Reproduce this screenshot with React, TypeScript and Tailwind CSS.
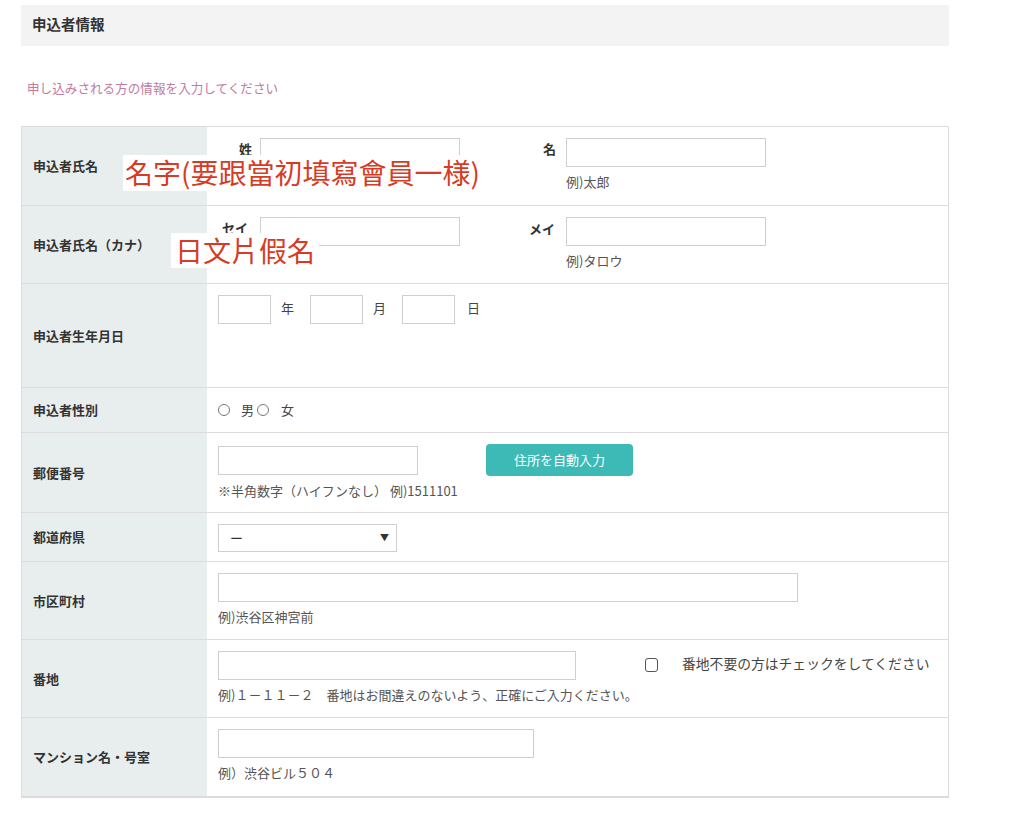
import React from "react";

const jp = { fontFamily: '"Noto Sans CJK JP", "Noto Sans", sans-serif' };

function Field({ w }: { w: string }) {
  return <div className={`${w} h-[29px] border border-[#cfcfcf] bg-white`} />;
}

function Note({ children }: { children: React.ReactNode }) {
  return <p className="mt-[5px] text-[13px] leading-[20px] text-[#555]">{children}</p>;
}

function Row({ label, h, children, center }: { label: string; h: string; children: React.ReactNode; center?: boolean }) {
  return (
    <div className={`flex ${h} border-b border-[#dcdcdc] last:border-b-0`}>
      <div className="w-[185px] shrink-0 bg-[#e8eeee] flex items-center pl-[11px] text-[13px] font-bold text-[#333]">
        {label}
      </div>
      <div className={`flex-1 px-[11px] ${center ? "flex items-center" : "pt-[11px]"}`}>{children}</div>
    </div>
  );
}

export default function App() {
  return (
    <div className="min-h-[819px] bg-white pt-[5px] pl-[21px]" style={jp}>
      <div className="w-[928px]">
        <div className="h-[41px] bg-[#f3f3f3] flex items-center pl-[11px] pb-[3px] text-[14.5px] font-bold text-[#333]">
          申込者情報
        </div>
        <p className="mt-[32px] pl-[6px] text-[12.6px] leading-[20px] text-[#c27ba0]">
          申し込みされる方の情報を入力してください
        </p>

        <div className="relative mt-[28px] border border-[#dcdcdc]">
          <Row label="申込者氏名" h="h-[79px]">
            <div className="flex">
              <div className="flex items-start">
                <span className="w-[34px] mt-[4px] text-right text-[13px] font-bold leading-[13px] text-[#333]">姓</span>
                <div className="ml-[8px]">
                  <Field w="w-[200px]" />
                </div>
              </div>
              <div className="flex ml-[50px]">
                <span className="w-[46px] text-right text-[13px] font-bold leading-[22px] text-[#333]">名</span>
                <div className="ml-[10px]">
                  <Field w="w-[200px]" />
                  <Note>例)太郎</Note>
                </div>
              </div>
            </div>
          </Row>

          <Row label="申込者氏名（カナ）" h="h-[78px]">
            <div className="flex">
              <div className="flex items-start">
                <span className="w-[30px] mt-[5px] text-right text-[13px] font-bold leading-[12px] text-[#333]">セイ</span>
                <div className="ml-[12px]">
                  <Field w="w-[200px]" />
                </div>
              </div>
              <div className="flex ml-[50px]">
                <span className="w-[45px] text-right text-[13px] font-bold leading-[24px] text-[#333]">メイ</span>
                <div className="ml-[11px]">
                  <Field w="w-[200px]" />
                  <Note>例)タロウ</Note>
                </div>
              </div>
            </div>
          </Row>

          <Row label="申込者生年月日" h="h-[104px]">
            <div className="flex items-center text-[13px] text-[#444]">
              <Field w="w-[53px]" />
              <span className="ml-[10px] mr-[16px] -mt-[4px]">年</span>
              <Field w="w-[53px]" />
              <span className="ml-[10px] mr-[16px] -mt-[4px]">月</span>
              <Field w="w-[53px]" />
              <span className="ml-[12px] -mt-[4px]">日</span>
            </div>
          </Row>

          <Row label="申込者性別" h="h-[45px]" center>
            <div className="flex items-center text-[13px] text-[#444]">
              <span className="w-[12px] h-[12px] rounded-full border border-[#777]" />
              <span className="ml-[11px]">男</span>
              <span className="ml-[3px] w-[12px] h-[12px] rounded-full border border-[#777]" />
              <span className="ml-[12px]">女</span>
            </div>
          </Row>

          <Row label="郵便番号" h="h-[80px]">
            <div className="flex items-center">
              <Field w="w-[200px]" />
              <button className="ml-[68px] w-[147px] h-[32px] rounded-[4px] bg-[#3dbab6] text-white text-[13px]">
                住所を自動入力
              </button>
            </div>
            <Note>※半角数字（ハイフンなし） 例)1511101</Note>
          </Row>

          <Row label="都道府県" h="h-[49px]">
            <div className="w-[179px] h-[28px] border border-[#cfcfcf] bg-white flex items-center justify-between pl-[11px] pr-[7px] text-[13px] text-[#333]">
              <span>ー</span>
              <span className="text-[9px]">▼</span>
            </div>
          </Row>

          <Row label="市区町村" h="h-[78px]">
            <Field w="w-[580px]" />
            <Note>例)渋谷区神宮前</Note>
          </Row>

          <Row label="番地" h="h-[78px]">
            <div className="flex items-start">
              <Field w="w-[358px]" />
              <span className="ml-[69px] mt-[7px] w-[13px] h-[14px] rounded-[3px] border border-[#555]" />
              <span className="ml-[24px] mt-[2px] text-[13.8px] leading-[20px] text-[#444]">番地不要の方はチェックをしてください</span>
            </div>
            <Note>例)１－１１－２　番地はお間違えのないよう、正確にご入力ください。</Note>
          </Row>

          <Row label="マンション名・号室" h="h-[79px]">
            <Field w="w-[316px]" />
            <Note>例）渋谷ビル５０４</Note>
          </Row>

          <div
            className="absolute left-[101px] top-[28px] h-[36px] bg-white px-[2px] text-[28px] leading-[34px] text-[#d63c25]"
            style={{ fontFamily: '"Noto Sans CJK TC", sans-serif' }}
          >
            名字(要跟當初填寫會員一様)
          </div>
          <div
            className="absolute left-[149px] top-[106px] h-[35px] bg-white px-[4px] text-[28px] leading-[34px] text-[#d63c25]"
            style={{ fontFamily: '"Noto Sans CJK TC", sans-serif' }}
          >
            日文片假名
          </div>
        </div>
      </div>
    </div>
  );
}
